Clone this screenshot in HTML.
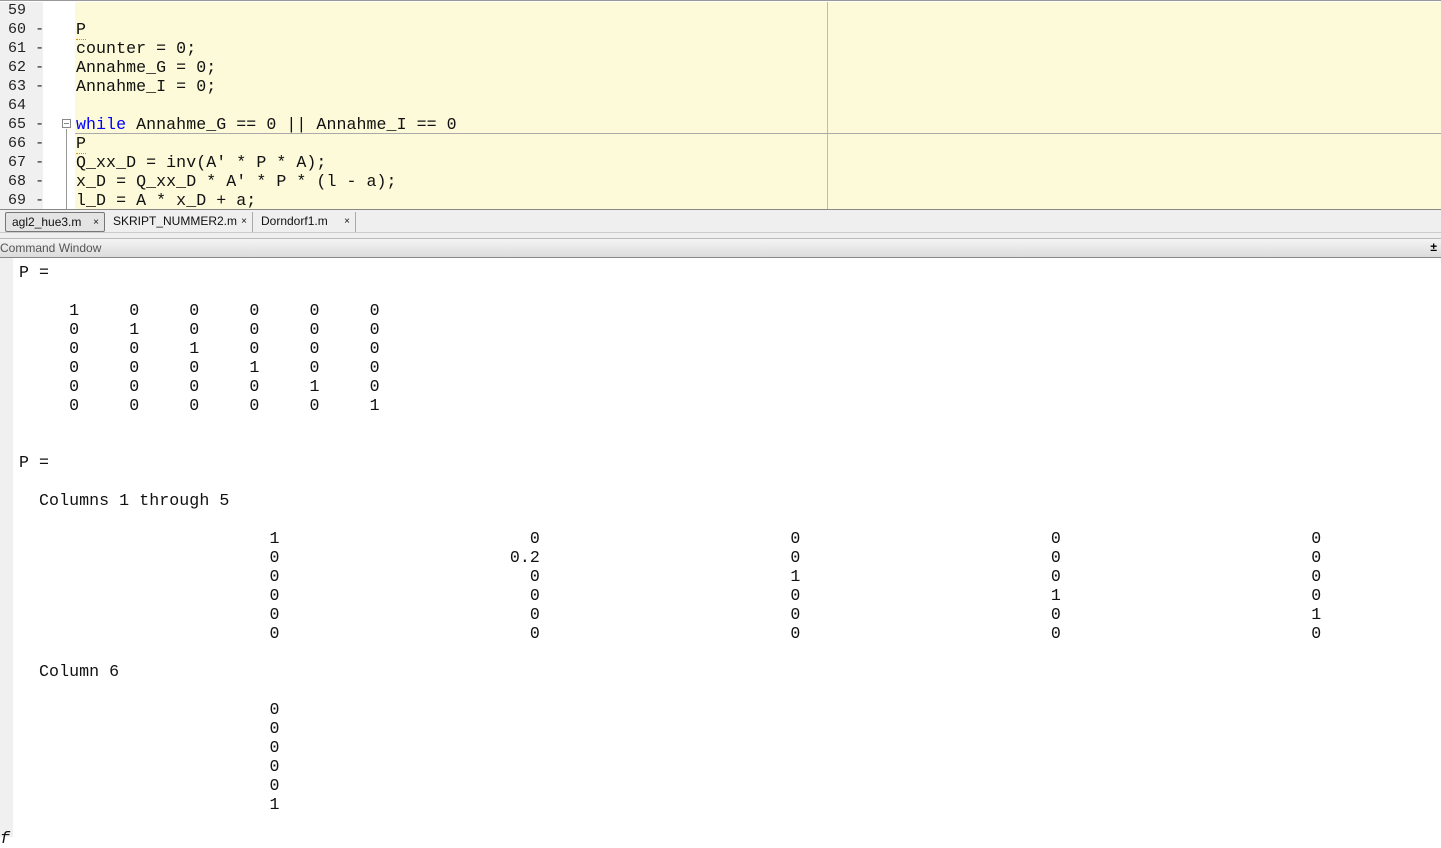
<!DOCTYPE html>
<html><head><meta charset="utf-8"><style>
*{margin:0;padding:0;box-sizing:border-box}
body{width:1441px;height:837px;overflow:hidden;background:#fff;position:relative;font-family:"Liberation Mono",monospace}
.m{font-family:"Liberation Mono",monospace;font-size:16.6px;letter-spacing:0.06px;line-height:19px;white-space:pre;color:#111;position:absolute}
#ed{position:absolute;left:0;top:0;width:1441px;height:209px;background:#fff;border-top:1px solid #999}
#gut{position:absolute;left:0;top:1px;width:43px;height:208px;background:#f0f0f0}
#yel{position:absolute;left:75px;top:1px;right:0;height:208px;background:#fcfad9}
#tabs{position:absolute;left:0;top:209px;width:1441px;height:23px;background:#efefef;border-top:1px solid #888;font-family:"Liberation Sans",sans-serif;font-size:12px}
.tab{position:absolute;top:2px;height:20px;padding:2px 6px;color:#111}
#gap{position:absolute;left:0;top:232px;width:1441px;height:6px;background:#efefef;border-top:1px solid #ccc}
#cw{position:absolute;left:0;top:238px;width:1441px;height:20px;background:linear-gradient(#f4f4f4,#dcdcdc);border-top:1px solid #bbb;border-bottom:1px solid #888;font-family:"Liberation Sans",sans-serif;font-size:12px;color:#555;padding:2px 0 0 0}
#strip{position:absolute;left:0;top:258px;width:13px;height:579px;background:#f0f0f0}
</style></head><body>
<div id="ed">
<div id="gut"></div>
<div id="yel"></div>
<div style="position:absolute;left:827px;top:1px;width:1px;height:208px;background:#bbb"></div>
<div style="position:absolute;left:75px;top:132px;right:0;height:1px;background:#aaa"></div>
<div style="position:absolute;left:62px;top:118px;width:9px;height:9px;border:1px solid #888;background:#fff"></div>
<div style="position:absolute;left:64px;top:122px;width:5px;height:1px;background:#888"></div>
<div style="position:absolute;left:66px;top:128px;width:1px;height:81px;background:#999"></div>
<div class="m" style="left:8px;top:0px;color:#222;font-size:15px;line-height:19px">59
60 -
61 -
62 -
63 -
64
65 -
66 -
67 -
68 -
69 -</div>
<div class="m" style="left:76px;top:19px"><span style="border-bottom:1px dotted #e09000">P</span>
counter = 0;
Annahme_G = 0;
Annahme_I = 0;

<span style="color:#0000ff">while</span> Annahme_G == 0 || Annahme_I == 0
<span style="border-bottom:1px dotted #e09000">P</span>
Q_xx_D = inv(A' * P * A);
x_D = Q_xx_D * A' * P * (l - a);
l_D = A * x_D + a;</div>
</div>
<div id="tabs">
<div class="tab" style="left:5px;width:100px;border:1px solid #777;border-radius:2px;background:#e4e4e4">agl2_hue3.m<span style="position:absolute;right:5px;font-size:10px;top:4px">×</span></div>
<div class="tab" style="left:107px;width:146px;border-right:1px solid #aaa">SKRIPT_NUMMER2.m<span style="position:absolute;right:5px;font-size:10px;top:4px">×</span></div>
<div class="tab" style="left:255px;width:101px;border-right:1px solid #aaa">Dorndorf1.m<span style="position:absolute;right:5px;font-size:10px;top:4px">×</span></div>
</div>
<div id="gap"></div>
<div id="cw">Command Window<span style="position:absolute;right:4px;top:1px;color:#000;font-weight:bold">±</span></div>
<div id="strip"></div>
<div class="m" style="left:19px;top:263px">P =

     1     0     0     0     0     0
     0     1     0     0     0     0
     0     0     1     0     0     0
     0     0     0     1     0     0
     0     0     0     0     1     0
     0     0     0     0     0     1


P =

  Columns 1 through 5

                         1                         0                         0                         0                         0
                         0                       0.2                         0                         0                         0
                         0                         0                         1                         0                         0
                         0                         0                         0                         1                         0
                         0                         0                         0                         0                         1
                         0                         0                         0                         0                         0

  Column 6

                         0
                         0
                         0
                         0
                         0
                         1</div>
<div class="m" style="left:0;top:829px;font-style:italic">f</div>
</body></html>
